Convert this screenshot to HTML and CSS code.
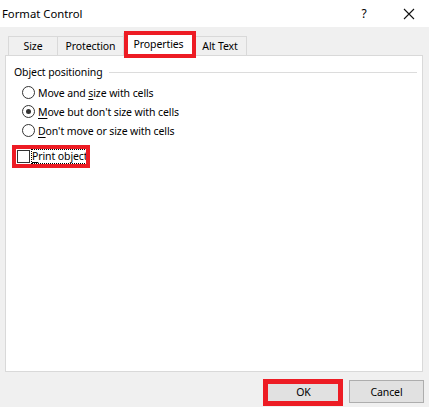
FILE: index.html
```html
<!DOCTYPE html>
<html>
<head>
<meta charset="utf-8">
<link rel="stylesheet" href="styles.css">
</head>
<body>
<div class="dialog">
  <div class="titlebar">
    <span class="title">Format Control</span>
    <span class="help">?</span>
    <span class="close">
      <svg width="12" height="12" viewBox="0 0 12 12"><path d="M1 1 L11 11 M11 1 L1 11" stroke="#111" stroke-width="1.1" fill="none"/></svg>
    </span>
  </div>
  <div class="tabs">
    <div class="tab tab-size">Size</div>
    <div class="tab tab-prot">Protection</div>
    <div class="tab tab-props active">Properties</div>
    <div class="tab tab-alt">Alt Text</div>
  </div>
  <div class="panel">
    <div class="group">
      <span class="group-label">Object positioning</span>
      <span class="group-line"></span>
    </div>
    <div class="options">
      <label class="radio-row"><span class="radio"></span><span>Move and <u>s</u>ize with cells</span></label>
      <label class="radio-row"><span class="radio checked"></span><span><u>M</u>ove but don't size with cells</span></label>
      <label class="radio-row"><span class="radio"></span><span><u>D</u>on't move or size with cells</span></label>
    </div>
    <label class="check-row"><span class="checkbox"></span><span class="focus"><u>P</u>rint object</span></label>
  </div>
  <div class="footer">
    <button class="btn btn-default">OK</button>
    <button class="btn">Cancel</button>
  </div>
  <div class="mark mark-tab"></div>
  <div class="mark mark-print"></div>
  <div class="mark mark-ok"></div>
</div>
</body>
</html>
```
FILE: styles.css
```css
html, body {
  margin: 0;
  padding: 0;
}
body {
  width: 429px;
  height: 407px;
  overflow: hidden;
  background: #f0f0f0;
  font-family: "Noto Sans", "Open Sans", sans-serif;
  font-size: 10.5px;
  letter-spacing: -0.1px;
  color: #000;
}
.dialog {
  position: relative;
  width: 429px;
  height: 407px;
  display: flex;
  flex-direction: column;
}
.titlebar {
  height: 27px;
  background: #fff;
  display: flex;
  align-items: center;
  flex-shrink: 0;
}
.title {
  margin-left: 2px;
  font-size: 11.3px;
  letter-spacing: 0;
  flex: 1;
  margin-top: -1px;
}
.help {
  width: 10px;
  font-size: 12px;
  margin-right: 34px;
  text-align: center;
  margin-top: -1px;
}
.close {
  width: 12px;
  height: 12px;
  margin-right: 14px;
  display: flex;
}
.tabs {
  margin-top: 6px;
  height: 22px;
  display: flex;
  align-items: flex-end;
  padding-left: 8px;
  flex-shrink: 0;
  position: relative;
}
.tab {
  box-sizing: border-box;
  height: 19px;
  border: 1px solid #d9d9d9;
  border-bottom: none;
  display: flex;
  align-items: center;
  justify-content: center;
  background: #f0f0f0;
  padding-bottom: 1px;
}
.tab + .tab {
  border-left: none;
}
.tab-size { width: 50px; }
.tab-prot { width: 65px; border-right: none; }
.tab-props { width: 71px; }
.tab-alt { width: 53px; border-left: none; }
.tab.active {
  height: 23px;
  margin-bottom: -1px;
  background: #fff;
  border-left: 1px solid #d9d9d9;
  border-right: 1px solid #d9d9d9;
  padding-bottom: 2px;
  position: relative;
}
.panel {
  box-sizing: border-box;
  height: 317px;
  margin: 0 6px 0 5px;
  background: #fff;
  border: 1px solid #d9d9d9;
  padding: 8px 5px 0 8px;
  flex-shrink: 0;
}
.group {
  display: flex;
  align-items: center;
  height: 16px;
}
.group-label {
  white-space: nowrap;
}
.group-line {
  flex: 1;
  height: 1px;
  background: #dcdcdc;
  margin-left: 6px;
  margin-top: 1px;
}
.options {
  display: flex;
  flex-direction: column;
  padding-top: 3px;
  padding-left: 8px;
}
.radio-row {
  height: 19px;
  display: flex;
  align-items: center;
  gap: 3px;
  white-space: nowrap;
}
.radio {
  box-sizing: border-box;
  width: 13px;
  height: 13px;
  border: 1px solid #333;
  border-radius: 50%;
  background: #fff;
  display: flex;
  align-items: center;
  justify-content: center;
}
.radio.checked::after {
  content: "";
  width: 5px;
  height: 5px;
  border-radius: 50%;
  background: #333;
}
.check-row {
  margin-top: 7px;
  height: 18px;
  display: flex;
  align-items: center;
  padding-left: 3px;
  gap: 1px;
  white-space: nowrap;
}
.checkbox {
  box-sizing: border-box;
  width: 13px;
  height: 13px;
  border: 1px solid #333;
  background: #fff;
}
.focus {
  outline: 1px dotted #000;
  outline-offset: -1px;
  padding: 0 1px 0 1px;
  line-height: 15px;
}
u {
  text-decoration: underline;
  text-underline-offset: 2px;
}
.footer {
  flex: 1;
  display: flex;
  justify-content: flex-end;
  align-items: flex-start;
  padding-top: 8px;
  padding-right: 5px;
  gap: 8px;
}
.btn {
  box-sizing: border-box;
  width: 75px;
  height: 23px;
  background: #e1e1e1;
  border: 1px solid #adadad;
  font-family: inherit;
  font-size: 10.5px;
  letter-spacing: -0.1px;
  padding: 0;
  color: #000;
}
.btn-default {
  border: 2px solid #0078d7;
}
.mark {
  position: absolute;
  z-index: 5;
  box-sizing: border-box;
  border: 4px solid #ed1c24;
  pointer-events: none;
}
.mark-tab {
  left: 124px;
  top: 31px;
  width: 72px;
  height: 27px;
}
.mark-print {
  left: 12px;
  top: 145px;
  width: 78px;
  height: 23px;
}
.mark-ok {
  left: 263px;
  top: 379px;
  width: 80px;
  height: 27px;
  border-width: 5px;
}
```
